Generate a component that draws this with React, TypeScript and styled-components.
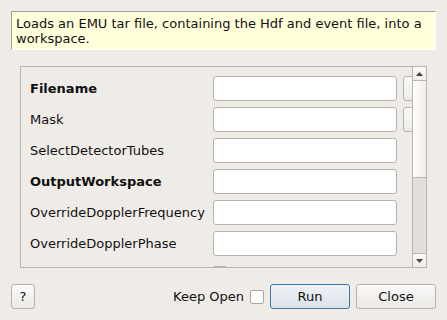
import React from "react";
import styled, { createGlobalStyle } from "styled-components";

const Global = createGlobalStyle`
  html, body { margin: 0; padding: 0; background: #efebe7; }
  body { font-family: "DejaVu Sans", "Noto Sans", sans-serif; font-size: 13px; color: #111; }
`;

const Dialog = styled.div`
  width: 447px;
  height: 320px;
  box-sizing: border-box;
  padding: 11px 11px 11px 11px;
  display: flex;
  flex-direction: column;
  background: #efebe7;
`;

const Description = styled.div`
  height: 39px;
  box-sizing: border-box;
  padding: 4px 4px 0 4px;
  background: #ffffdc;
  border-top: 1px solid #a29f9b;
  border-left: 1px solid #a29f9b;
  border-right: 1px solid #ffffff;
  border-bottom: 1px solid #ffffff;
  line-height: 15px;
  white-space: nowrap;
  overflow: hidden;
`;

const Panel = styled.div`
  margin: 16px 9px 0 9px;
  height: 202px;
  box-sizing: border-box;
  border: 1px solid #b8b4af;
  display: flex;
`;

const Viewport = styled.div`
  flex: 1;
  overflow: hidden;
  padding: 9px 0 0 9px;
`;

const Row = styled.div`
  display: flex;
  align-items: center;
  height: 25px;
  margin-bottom: 6px;
  width: 460px;
`;

const Label = styled.div<{ $bold?: boolean }>`
  width: 183px;
  flex-shrink: 0;
  font-weight: ${(p) => (p.$bold ? "bold" : "normal")};
  white-space: nowrap;
`;

const Input = styled.div`
  width: 184px;
  height: 25px;
  box-sizing: border-box;
  flex-shrink: 0;
  background: #ffffff;
  border: 1px solid #b5b1ac;
  border-radius: 3px;
`;

const Browse = styled.div`
  margin-left: 6px;
  width: 80px;
  height: 25px;
  box-sizing: border-box;
  flex-shrink: 0;
  border: 1px solid #b5b1ac;
  border-radius: 3px;
  background: linear-gradient(#fbfaf9, #ecebe8);
`;

const SmallCheck = styled.div`
  width: 14px;
  height: 14px;
  box-sizing: border-box;
  align-self: flex-start;
  margin-top: 4px;
  background: #ffffff;
  border: 1px solid #b5b1ac;
  border-radius: 2px;
  flex-shrink: 0;
`;

const ScrollBar = styled.div`
  width: 14px;
  box-sizing: border-box;
  border-left: 1px solid #b8b4af;
  display: flex;
  flex-direction: column;
  background: #e1dfdc;
`;

const ArrowButton = styled.div<{ $down?: boolean }>`
  height: 14px;
  box-sizing: border-box;
  background: linear-gradient(#fbfaf9, #efedeb);
  ${(p) => (p.$down ? "border-top: 1px solid #b8b4af;" : "border-bottom: 1px solid #b8b4af;")}
  display: flex;
  align-items: center;
  justify-content: center;
`;

const Thumb = styled.div`
  height: 97px;
  box-sizing: border-box;
  border-bottom: 1px solid #b8b4af;
  background: linear-gradient(to right, #ffffff, #f0eeec);
`;

const Track = styled.div`
  flex: 1;
  background: #e1dfdc;
`;

const Footer = styled.div`
  margin-top: 16px;
  height: 25px;
  display: flex;
  align-items: center;
`;

const Button = styled.button<{ $w: number; $default?: boolean }>`
  width: ${(p) => p.$w}px;
  height: 25px;
  box-sizing: border-box;
  padding: 0;
  margin: 0;
  font-family: "DejaVu Sans", "Noto Sans", sans-serif;
  font-size: 13px;
  color: #111;
  border-radius: 3px;
  border: 1px solid ${(p) => (p.$default ? "#3b78ab" : "#b5b1ac")};
  background: ${(p) =>
    p.$default
      ? "linear-gradient(#eef2f6, #dbe2e9)"
      : "linear-gradient(#fbfaf9, #ebe9e6)"};
`;

const Spacer = styled.div`
  flex: 1;
`;

const KeepLabel = styled.span`
  margin-right: 6px;
`;

const CheckBox = styled.div`
  width: 14px;
  height: 14px;
  box-sizing: border-box;
  background: #ffffff;
  border: 1px solid #aaa6a1;
  border-radius: 2px;
  margin-right: 6px;
`;

const Gap = styled.div`
  width: 6px;
`;

const Up = () => (
  <svg width="7" height="4" viewBox="0 0 7 4">
    <path d="M3.5 0 L7 4 L0 4 Z" fill="#444" />
  </svg>
);
const Down = () => (
  <svg width="7" height="4" viewBox="0 0 7 4">
    <path d="M0 0 L7 0 L3.5 4 Z" fill="#444" />
  </svg>
);

const rows: { label: string; bold?: boolean; browse?: boolean }[] = [
  { label: "Filename", bold: true, browse: true },
  { label: "Mask", browse: true },
  { label: "SelectDetectorTubes" },
  { label: "OutputWorkspace", bold: true },
  { label: "OverrideDopplerFrequency" },
  { label: "OverrideDopplerPhase" },
];

export default function App() {
  return (
    <>
      <Global />
      <Dialog>
        <Description>
          Loads an EMU tar file, containing the Hdf and event file, into a
          <br />
          workspace.
        </Description>
        <Panel>
          <Viewport>
            {rows.map((r) => (
              <Row key={r.label}>
                <Label $bold={r.bold}>{r.label}</Label>
                <Input />
                {r.browse && <Browse />}
              </Row>
            ))}
            <Row>
              <Label />
              <SmallCheck />
            </Row>
          </Viewport>
          <ScrollBar>
            <ArrowButton>
              <Up />
            </ArrowButton>
            <Thumb />
            <Track />
            <ArrowButton $down>
              <Down />
            </ArrowButton>
          </ScrollBar>
        </Panel>
        <Footer>
          <Button $w={24}>?</Button>
          <Spacer />
          <KeepLabel>Keep Open</KeepLabel>
          <CheckBox />
          <Button $w={80} $default>
            Run
          </Button>
          <Gap />
          <Button $w={80}>Close</Button>
        </Footer>
      </Dialog>
    </>
  );
}
